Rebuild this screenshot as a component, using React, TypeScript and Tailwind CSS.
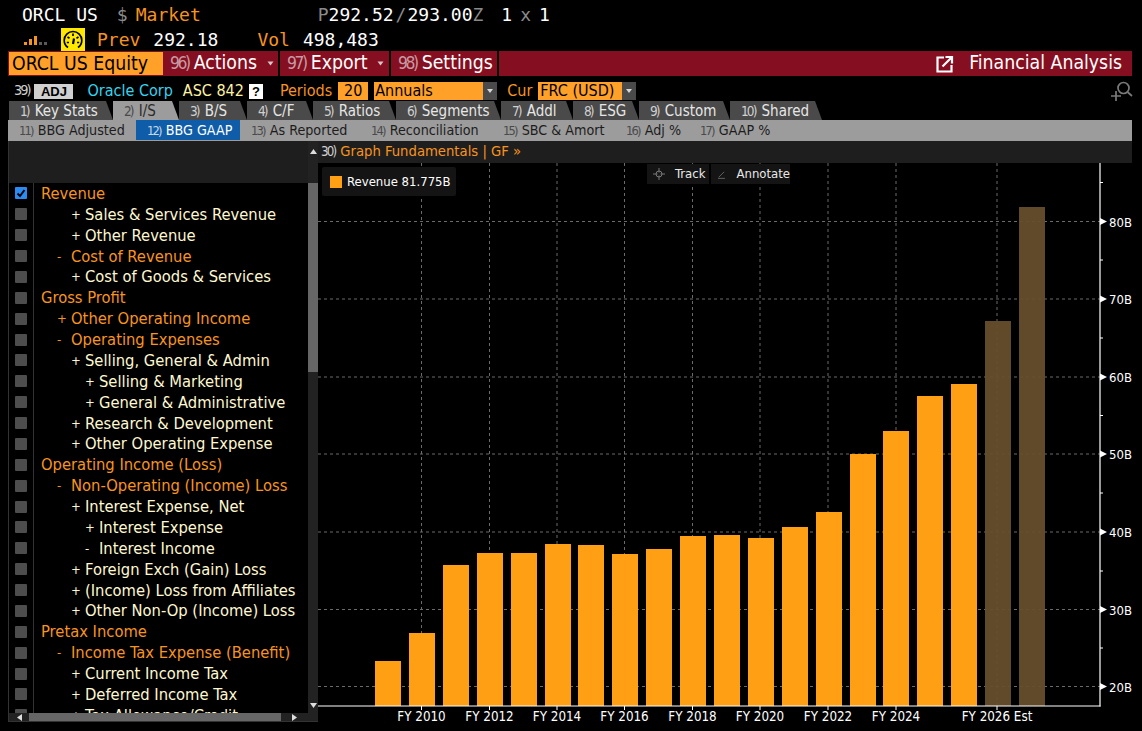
import React from "react";

const barFont = "font-['DejaVu_Sans_Condensed','DejaVu_Sans',sans-serif]";

type Row = { label: string; level: number; sign?: string; hot?: boolean };

const rows: Row[] = [
  { label: "Revenue", level: 0, hot: true },
  { label: "Sales & Services Revenue", level: 2, sign: "+" },
  { label: "Other Revenue", level: 2, sign: "+" },
  { label: "Cost of Revenue", level: 1, sign: "-", hot: true },
  { label: "Cost of Goods & Services", level: 2, sign: "+" },
  { label: "Gross Profit", level: 0, hot: true },
  { label: "Other Operating Income", level: 1, sign: "+", hot: true },
  { label: "Operating Expenses", level: 1, sign: "-", hot: true },
  { label: "Selling, General & Admin", level: 2, sign: "+" },
  { label: "Selling & Marketing", level: 3, sign: "+" },
  { label: "General & Administrative", level: 3, sign: "+" },
  { label: "Research & Development", level: 2, sign: "+" },
  { label: "Other Operating Expense", level: 2, sign: "+" },
  { label: "Operating Income (Loss)", level: 0, hot: true },
  { label: "Non-Operating (Income) Loss", level: 1, sign: "-", hot: true },
  { label: "Interest Expense, Net", level: 2, sign: "+" },
  { label: "Interest Expense", level: 3, sign: "+" },
  { label: "Interest Income", level: 3, sign: "-" },
  { label: "Foreign Exch (Gain) Loss", level: 2, sign: "+" },
  { label: "(Income) Loss from Affiliates", level: 2, sign: "+" },
  { label: "Other Non-Op (Income) Loss", level: 2, sign: "+" },
  { label: "Pretax Income", level: 0, hot: true },
  { label: "Income Tax Expense (Benefit)", level: 1, sign: "-", hot: true },
  { label: "Current Income Tax", level: 2, sign: "+" },
  { label: "Deferred Income Tax", level: 2, sign: "+" },
  { label: "Tax Allowance/Credit", level: 2, sign: "+" },
];

const indent = ["pl-[7px]", "pl-[23px]", "pl-[37px]", "pl-[51px]"];

const tabs = [
  { n: "1)", label: "Key Stats", w: "w-[104px]" },
  { n: "2)", label: "I/S", w: "w-[66px]", active: true },
  { n: "3)", label: "B/S", w: "w-[68px]" },
  { n: "4)", label: "C/F", w: "w-[66px]" },
  { n: "5)", label: "Ratios", w: "w-[83px]" },
  { n: "6)", label: "Segments", w: "w-[105px]" },
  { n: "7)", label: "Addl", w: "w-[72px]" },
  { n: "8)", label: "ESG", w: "w-[66px]" },
  { n: "9)", label: "Custom", w: "w-[91px]" },
  { n: "10)", label: "Shared", w: "w-[92px]" },
];

const subTabs = [
  { n: "11)", label: "BBG Adjusted", w: "w-[128px]" },
  { n: "12)", label: "BBG GAAP", w: "w-[104px]", active: true },
  { n: "13)", label: "As Reported", w: "w-[120px]" },
  { n: "14)", label: "Reconciliation", w: "w-[132px]" },
  { n: "15)", label: "SBC & Amort", w: "w-[123px]" },
  { n: "16)", label: "Adj %", w: "w-[74px]" },
  { n: "17)", label: "GAAP %", w: "w-[100px]" },
];

const bars = [
  [375, 661], [409, 633], [443, 565], [477, 553], [511, 553], [545, 544], [578, 545],
  [612, 554], [646, 549], [680, 536], [714, 535], [748, 538], [782, 527], [816, 512],
  [850, 454], [883, 431], [917, 396], [951, 384],
];

const estBars = [[985, 321], [1019, 207]];

const yTicks = [
  { y: 221.5, t: "80B" }, { y: 299, t: "70B" }, { y: 377, t: "60B" }, { y: 454, t: "50B" },
  { y: 532, t: "40B" }, { y: 609.5, t: "30B" }, { y: 686.5, t: "20B" },
];

const xTicks = [
  { x: 421.5, t: "FY 2010" }, { x: 489.5, t: "FY 2012" }, { x: 557, t: "FY 2014" },
  { x: 624.5, t: "FY 2016" }, { x: 692.5, t: "FY 2018" }, { x: 760, t: "FY 2020" },
  { x: 828, t: "FY 2022" }, { x: 896, t: "FY 2024" }, { x: 997, t: "FY 2026 Est" },
];

const Num = ({ children, className = "" }: { children: string; className?: string }) => (
  <span className={`inline-block tracking-[-0.14em] text-[0.9em] mr-[5px] ${className}`}>{children}</span>
);

const Caret = () => (
  <svg width="7" height="5" viewBox="0 0 7 5" className="ml-[10px]">
    <path d="M0.5 0.5H6.5L3.5 4.5Z" fill="#d9c6c9" />
  </svg>
);

const DropArrow = () => (
  <span className="w-[14px] h-[18px] bg-[#4a4a4a] flex items-center justify-center">
    <svg width="6" height="4" viewBox="0 0 6 4">
      <path d="M0 0H6L3 4Z" fill="#d8d8d8" />
    </svg>
  </span>
);

const Chart = () => (
  <svg viewBox="318 163 824 568" className="w-[824px] h-[568px] block">
    {yTicks.map((t) => (
      <line key={t.t} x1={318} x2={1100} y1={t.y} y2={t.y} stroke="#6b6b6b" strokeDasharray="3 3" />
    ))}
    {xTicks.map((t) => (
      <line key={t.t} x1={t.x} x2={t.x} y1={163} y2={706} stroke="#6b6b6b" strokeDasharray="3 3" />
    ))}
    {bars.map(([x, y]) => (
      <rect key={x} x={x} y={y} width={26} height={706 - y} fill="#ff9f14" />
    ))}
    {estBars.map(([x, y]) => (
      <rect key={x} x={x} y={y} width={26} height={706 - y} fill="#664f2c" fillOpacity={0.94} />
    ))}
    <line x1={318} x2={1100.5} y1={706} y2={706} stroke="#fff" strokeWidth={1.2} />
    <line x1={1100} x2={1100} y1={163} y2={706.5} stroke="#fff" strokeWidth={1.2} />
    {[182.5, 260, 338, 415.5, 493, 571, 648].map((y) => (
      <line key={y} x1={1100} x2={1103} y1={y} y2={y} stroke="#fff" />
    ))}
    {yTicks.map((t) => (
      <g key={t.t}>
        <path d={`M1100 ${t.y - 3.5}L1107 ${t.y}L1100 ${t.y + 3.5}Z`} fill="#fff" />
        <text x={1109} y={t.y + 5} fill="#fff" fontSize={13} fontFamily="'DejaVu Sans Condensed','DejaVu Sans',sans-serif">
          {t.t}
        </text>
      </g>
    ))}
    {xTicks.map((t) => (
      <g key={t.t}>
        <line x1={t.x} x2={t.x} y1={706} y2={710} stroke="#fff" />
        <text x={t.x} y={721} textAnchor="middle" fill="#fff" fontSize={13.3} fontFamily="'DejaVu Sans Condensed','DejaVu Sans',sans-serif">
          {t.t}
        </text>
      </g>
    ))}
  </svg>
);

export default function App() {
  return (
    <div className={`w-[1142px] h-[731px] bg-black overflow-hidden flex flex-col ${barFont}`}>
      {/* quote lines */}
      <div className="h-[28px] pl-[22px] flex items-center font-['DejaVu_Sans_Mono',monospace] text-[18px] whitespace-pre">
        <span className="text-white">ORCL US</span>
        <span className="text-[#8a8a8a] ml-[19px]">$</span>
        <span className="text-[#f7941e] ml-[8px]">Market</span>
        <span className="text-[#8a8a8a] ml-[117px]">P</span>
        <span className="text-white">292.52</span>
        <span className="text-[#8a8a8a] ml-[2px]">/</span>
        <span className="text-white ml-[1px]">293.00</span>
        <span className="text-[#8a8a8a]">Z</span>
        <span className="text-white ml-[18px]">1</span>
        <span className="text-[#8a8a8a] ml-[8px]">x</span>
        <span className="text-white ml-[8px]">1</span>
      </div>
      <div className="h-[23px] pl-[24px] flex items-center font-['DejaVu_Sans_Mono',monospace] text-[18px] whitespace-pre">
        <svg width="23" height="12" viewBox="0 0 23 12">
          <rect x="0" y="8" width="3" height="3" fill="#f7941e" />
          <rect x="5" y="5" width="3" height="6" fill="#f7941e" />
          <rect x="10" y="2" width="3" height="9" fill="#f7941e" />
          <rect x="15" y="8" width="3" height="3" fill="#5a5a5a" />
          <rect x="20" y="8" width="3" height="3" fill="#5a5a5a" />
        </svg>
        <span className="ml-[14px] w-[24px] h-[24px] bg-[#ffe800] flex items-center justify-center">
          <svg width="20" height="20" viewBox="0 0 20 20" fill="none" stroke="#000" strokeWidth="1.7">
            <path d="M5 17.5C2.6 15.8 1.2 13.1 1.2 10.2 1.2 5.400 5.200 1.500 10 1.500S18.800 5.400 18.800 10.200C18.800 13.100 17.400 15.800 15 17.500" />
            <path d="M10 3.500V6M4.500 7L6.500 8.300M15.500 7L13.500 8.300M3.800 12.500H6M14 12.500H16.200" />
            <path d="M10 14L11 8.500" strokeWidth="2.200" />
          </svg>
        </span>
        <span className="text-[#f7941e] ml-[12px]">Prev</span>
        <span className="text-white ml-[13px]">292.18</span>
        <span className="text-[#f7941e] ml-[39px]">Vol</span>
        <span className="text-white ml-[13px]">498,483</span>
      </div>

      {/* red command bar */}
      <div className="ml-[8px] w-[1124px] h-[25px] bg-[#850f20] flex items-stretch text-[19.3px] text-white">
        <div className="my-[1px] ml-[1px] w-[154px] bg-[#ffa028] text-black pl-[3px] leading-[24px] whitespace-nowrap">
          ORCL US Equity
        </div>
        <div className="w-[117px] border-r-2 border-black flex items-center pl-[7px]">
          <Num className="text-[#c79aa2]">96)</Num>Actions<Caret />
        </div>
        <div className="w-[111px] border-r-2 border-black flex items-center pl-[7px]">
          <Num className="text-[#c79aa2]">97)</Num>Export<Caret />
        </div>
        <div className="w-[108px] border-r-2 border-black flex items-center pl-[7px]">
          <Num className="text-[#c79aa2]">98)</Num>Settings
        </div>
        <div className="flex-1 flex items-center justify-end pr-[10px]">
          <svg width="18" height="18" viewBox="0 0 18 18" fill="none" stroke="#fff" strokeWidth="2.200" className="mr-[15px]">
            <path d="M8 2.500H1.500V16.500H15.500V10" />
            <path d="M6.500 11.500L15 3M9.500 2H16V8.500" />
          </svg>
          Financial Analysis
        </div>
      </div>

      {/* security line */}
      <div className="h-[25px] pl-[14px] pt-[5px] flex items-center text-[16px] whitespace-nowrap relative">
        <Num className="text-[#cfcfcf]">39)</Num>
        <span className="w-[39px] h-[15px] bg-[#d0d0d0] text-black text-[13px] font-bold leading-[15px] text-center font-['Liberation_Sans',sans-serif]">ADJ</span>
        <span className="text-[#35d4ee] ml-[14px]">Oracle Corp</span>
        <span className="text-[#fff3a0] ml-[10px]">ASC 842</span>
        <span className="ml-[5px] w-[14px] h-[15px] bg-white text-black text-[13px] font-bold leading-[15px] text-center font-['Liberation_Sans',sans-serif]">?</span>
        <span className="text-[#f7941e] ml-[17px]">Periods</span>
        <span className="ml-[6px] w-[30px] h-[18px] bg-[#ffa028] text-black leading-[18px] text-center">20</span>
        <span className="ml-[6px] w-[109px] h-[18px] bg-[#ffa028] text-black leading-[18px] pl-[1px]">Annuals</span>
        <DropArrow />
        <span className="text-[#f7941e] ml-[10px]">Cur</span>
        <span className="ml-[6px] w-[84px] h-[18px] bg-[#ffa028] text-black leading-[18px] pl-[2px]">FRC (USD)</span>
        <DropArrow />
        <svg width="22" height="21" viewBox="0 0 22 21" fill="none" stroke="#7a7a7a" strokeWidth="1.700" className="absolute right-[9px] top-[5px]">
          <circle cx="12.500" cy="7" r="5.500" />
          <path d="M16.500 11L21 15M5 10V20M0 15H10" />
        </svg>
      </div>

      {/* tabs */}
      <div className="h-[19px] pl-[9px] flex text-[15px] leading-[21px] whitespace-nowrap">
        {tabs.map((t) => (
          <div
            key={t.label}
            className={`${t.w} h-[19px] pl-[10px] [clip-path:polygon(0_0,calc(100%-7px)_0,100%_100%,0_100%)] ${t.active ? "bg-[#9c9c9c] text-[#2a2a2a]" : "bg-[#4a4a4a] text-[#e6e6e6]"}`}
          >
            <Num className={`ml-[1px] mr-[6px] ${t.active ? "text-[#4a4a4a]" : "text-[#d0d0d0]"}`}>{t.n}</Num>
            {t.label}
          </div>
        ))}
      </div>
      <div className="ml-[8px] w-[1124px] h-[21px] bg-[#9c9c9c] flex text-[14.2px] leading-[21px] text-[#1c1c1c] whitespace-nowrap">
        {subTabs.map((t) => (
          <div
            key={t.label}
            className={`${t.w} h-[20px] pl-[11px] ${t.active ? "bg-[#0f5da8] text-white" : ""}`}
          >
            <Num className={t.active ? "text-[#c8d8e8]" : "text-[#4a4a4a]"}>{t.n}</Num>
            {t.label}
          </div>
        ))}
      </div>

      {/* main */}
      <div className="flex-1 flex min-h-0 pl-[8px]">
        <div className="w-[310px] h-[581px] flex flex-col border-l border-b border-[#333333]">
          <div className="h-[42px] bg-[#1e1e1e] shrink-0 flex">
            <div className="flex-1" />
            <div className="w-[10px] bg-[#222222] flex justify-center pt-[8px]">
              <svg width="7" height="5" viewBox="0 0 7 5">
                <path d="M3.500 0L7 5H0Z" fill="#ddd" />
              </svg>
            </div>
          </div>
          <div className="flex-1 min-h-0 flex">
            <div className="flex-1 min-w-0 overflow-hidden">
              <div className="h-[530px] overflow-hidden">
                {rows.map((r, i) => (
                  <div key={r.label} className="h-[20.875px] flex items-center">
                    <div className="w-[25px] h-full shrink-0 border-r border-[#333333] flex items-center justify-center">
                      <span
                        className={`w-[12px] h-[12px] rounded-[1px] flex items-center justify-center ${i === 0 ? "bg-[#2a8cf0]" : "bg-[#4d4d4d]"}`}
                      >
                        {i === 0 && (
                          <svg width="10" height="10" viewBox="0 0 10 10" fill="none" stroke="#001" strokeWidth="2">
                            <path d="M1.500 5.500L4 8L8.500 2" />
                          </svg>
                        )}
                      </span>
                    </div>
                    <div
                      className={`${indent[r.level]} flex items-center text-[16.4px] leading-[19px] whitespace-nowrap ${r.hot ? "text-[#f7941e]" : "text-[#fff8d0]"}`}
                    >
                      {r.sign && <span className="w-[14px] shrink-0 text-[13px]">{r.sign}</span>}
                      {r.label}
                    </div>
                  </div>
                ))}
              </div>
              <div className="h-[9px] bg-[#222222] flex items-center">
                <span className="w-[20px] flex justify-center">
                  <svg width="5" height="7" viewBox="0 0 5 7">
                    <path d="M0 3.500L5 0V7Z" fill="#ddd" />
                  </svg>
                </span>
                <span className="w-[252px] h-full bg-[#666666]" />
                <span className="flex-1 flex justify-center">
                  <svg width="5" height="7" viewBox="0 0 5 7">
                    <path d="M5 3.500L0 0V7Z" fill="#ddd" />
                  </svg>
                </span>
              </div>
            </div>
            <div className="w-[10px] shrink-0 bg-[#222222] flex flex-col">
              <div className="h-[189px] bg-[#666666]" />
              <div className="flex-1" />
              <div className="h-[20px] flex justify-center pt-[2px]">
                <svg width="7" height="5" viewBox="0 0 7 5">
                  <path d="M0 0H7L3.500 5Z" fill="#ddd" />
                </svg>
              </div>
            </div>
          </div>
        </div>

        <div className="flex-1 min-w-0 flex flex-col relative">
          <div className="h-[22px] shrink-0 bg-[#1e1e1e] mr-[10px] pl-[3px] text-[14.7px] leading-[20px] text-[#f7941e] whitespace-nowrap">
            <Num className="text-[#d0d0d0]">30)</Num>Graph Fundamentals | GF »
          </div>
          <Chart />
          <div className="absolute left-[4px] top-[26px] h-[29px] w-[134px] bg-[#141414] rounded-[2px] flex items-center pl-[8px] text-[13px] text-white whitespace-nowrap">
            <span className="w-[12px] h-[12px] bg-[#ff9f14] mr-[5px]" />
            Revenue 81.775B
          </div>
          <div className="absolute left-[329px] top-[23px] h-[20px] flex gap-[2px] text-[13px] text-[#e8e8e8] whitespace-nowrap">
            <div className="w-[62px] bg-[#141414] flex items-center pl-[6px]">
              <svg width="12" height="12" viewBox="0 0 12 12" fill="none" stroke="#777" className="mr-[10px]">
                <circle cx="6" cy="6" r="3" />
                <path d="M6 0V4.500M6 7.500V12M0 6H4.500M7.500 6H12" />
              </svg>
              Track
            </div>
            <div className="w-[79px] bg-[#141414] flex items-center pl-[7px]">
              <svg width="11" height="11" viewBox="0 0 11 11" fill="none" stroke="#777" className="mr-[10px]">
                <path d="M1 9L8 2M0 10.500H9" />
              </svg>
              Annotate
            </div>
          </div>
        </div>
      </div>
    </div>
  );
}
